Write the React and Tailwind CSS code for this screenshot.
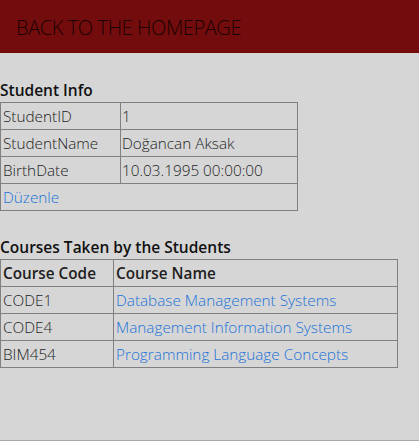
export default function App() {
  const info = [
    ['StudentID', '1'],
    ['StudentName', 'Doğancan Aksak'],
    ['BirthDate', '10.03.1995 00:00:00'],
  ];

  const courses = [
    ['CODE1', 'Database Management Systems'],
    ['CODE4', 'Management Information Systems'],
    ['BIM454', 'Programming Language Concepts'],
  ];

  return (
    <div className="min-h-[441px] bg-[#d6d6d6] border-b border-[#a8a8a8] text-[#1e1e1e] font-['Open_Sans',sans-serif]">
      {/* Üst bar */}
      <div className="h-[53px] bg-[#730c0c] flex items-center px-4 pt-[3px]">
        <a href="#" className="text-[20px] font-light text-[#1a0303] tracking-[-0.02em] uppercase">
          Back to the Homepage
        </a>
      </div>

      <div className="pt-[25px]">
        <h3 className="text-[15.5px] font-semibold leading-[24px] text-[#111]">Student Info</h3>
        <table className="border-collapse w-[298px] text-[15.3px] font-light">
          <tbody>
            {info.map(([k, v]) => (
              <tr key={k} className="h-[27px]">
                <td className="border border-[#808080] px-[2px] pt-[1px] w-[120px] leading-none">{k}</td>
                <td className="border border-[#808080] px-[1px] pt-[1px] leading-none">{v}</td>
              </tr>
            ))}
            <tr className="h-[27px]">
              <td colSpan={2} className="border border-[#808080] px-[2px] pt-[1px] leading-none">
                <a href="#" className="text-[#1a73d9]">Düzenle</a>
              </td>
            </tr>
          </tbody>
        </table>

        <h3 className="mt-[24px] text-[15.5px] font-semibold leading-[24px] text-[#111]">Courses Taken by the Students</h3>
        <table className="border-collapse w-[398px] text-[15.3px] font-light">
          <thead>
            <tr className="h-[27px]">
              <th className="border border-[#808080] px-[2px] pt-[1px] w-[113px] text-left font-semibold leading-none">Course Code</th>
              <th className="border border-[#808080] px-[2px] pt-[1px] text-left font-semibold leading-none">Course Name</th>
            </tr>
          </thead>
          <tbody>
            {courses.map(([code, name]) => (
              <tr key={code} className="h-[27px]">
                <td className="border border-[#808080] px-[2px] pt-[1px] leading-none">{code}</td>
                <td className="border border-[#808080] px-[2px] pt-[1px] leading-none">
                  <a href="#" className="text-[#1a73d9]">{name}</a>
                </td>
              </tr>
            ))}
          </tbody>
        </table>
      </div>
    </div>
  );
}
